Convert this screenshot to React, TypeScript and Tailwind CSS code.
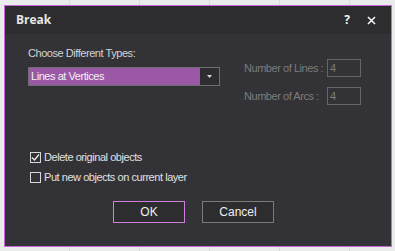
const font = "font-['Liberation_Sans',Arial,sans-serif]"

const Check = ({ checked }: { checked?: boolean }) => (
  <div className="w-[11px] h-[11px] border border-[#d8d8d8] flex items-center justify-center">
    {checked && (
      <svg width="9" height="9" viewBox="0 0 9 9">
        <path d="M1 4.5 L3.5 7 L8 1.5" fill="none" stroke="#e8e8e8" strokeWidth="1.4" />
      </svg>
    )}
  </div>
)

export default function App() {
  return (
    <div className="w-[395px] h-[251px] bg-[#e9ecea] pt-[5px] pl-[4px] overflow-hidden bg-[repeating-linear-gradient(90deg,transparent_0,transparent_69px,#d3dcd6_69px,#d3dcd6_70px)]">
      <div className={`w-[388px] h-[242px] border border-[#c768d9] bg-[#333337] flex flex-col ${font} tracking-[-0.45px]`}>
        <div className="h-[28px] bg-[#2d2d30] flex items-center pl-[11px] pr-[15px] shrink-0 tracking-normal">
          <span className="text-[12px] font-bold text-[#e6e6e6] font-['Open_Sans',sans-serif]">Break</span>
          <span className="ml-auto text-[12px] font-bold text-[#f0f0f0] font-['Open_Sans',sans-serif]">?</span>
          <svg className="ml-[17px]" width="9" height="9" viewBox="0 0 9 9">
            <path d="M1 1 L8 8 M8 1 L1 8" stroke="#f2f2f2" strokeWidth="1.6" />
          </svg>
        </div>
        <div className="flex pl-[23px] pt-[12px] h-[110px]">
          <div className="flex flex-col w-[192px]">
            <div className="text-[11px] leading-[14px] text-[#d4d4d4] whitespace-nowrap">Choose Different Types:</div>
            <div className="mt-[7px] h-[19px] border border-[#6e6e6e] flex">
              <div className="flex-1 bg-[#9b58a6] text-[11px] leading-[17px] text-[#f2f2f2] pl-[2px] whitespace-nowrap">Lines at Vertices</div>
              <div className="w-[19px] bg-[#2d2d30] flex items-center justify-center">
                <svg width="5" height="3" viewBox="0 0 5 3"><path d="M0 0 H5 L2.5 3 Z" fill="#d8d8d8" /></svg>
              </div>
            </div>
          </div>
          <div className="ml-[24px] mt-[13px] flex flex-col gap-[10px]">
            <div className="flex items-center h-[18px]">
              <span className="w-[83px] text-[11px] text-[#7c7c7c] whitespace-nowrap">Number of Lines :</span>
              <div className="w-[34px] h-[18px] border border-[#666] text-[11px] text-[#7c7c7c] pl-[2px] leading-[16px]">4</div>
            </div>
            <div className="flex items-center h-[18px]">
              <span className="w-[83px] text-[11px] text-[#7c7c7c] whitespace-nowrap">Number of Arcs :</span>
              <div className="w-[34px] h-[18px] border border-[#666] text-[11px] text-[#7c7c7c] pl-[2px] leading-[16px]">4</div>
            </div>
          </div>
        </div>
        <div className="pl-[25px] flex flex-col gap-[9px] mt-[8px]">
          <div className="flex items-center gap-[3px] h-[11px]">
            <Check checked />
            <span className="text-[11px] text-[#e0e0e0] whitespace-nowrap">Delete original objects</span>
          </div>
          <div className="flex items-center gap-[3px] h-[11px]">
            <Check />
            <span className="text-[11px] text-[#e0e0e0] whitespace-nowrap">Put new objects on current layer</span>
          </div>
        </div>
        <div className="flex pl-[108px] gap-[17px] mt-[18px] tracking-normal">
          <div className="w-[72px] h-[22px] border border-[#d07ee0] bg-[#2d2d30] flex items-center justify-center text-[12px] text-[#f0f0f0]">OK</div>
          <div className="w-[72px] h-[22px] border border-[#7a7a7a] bg-[#2d2d30] flex items-center justify-center text-[12px] text-[#f0f0f0]">Cancel</div>
        </div>
      </div>
    </div>
  )
}
